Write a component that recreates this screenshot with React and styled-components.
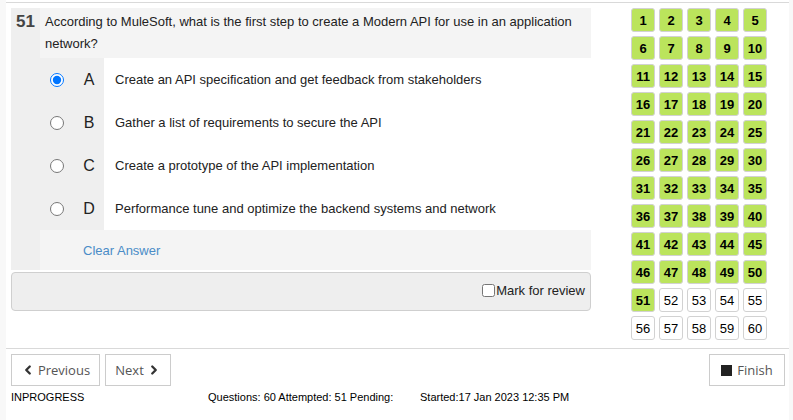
import React from "react";
import styled, { createGlobalStyle } from "styled-components";
import { ChevronLeft, ChevronRight } from "lucide-react";

const Global = createGlobalStyle`
  html, body { margin: 0; padding: 0; background: #f8f8f8; }
  body { font-family: "Liberation Sans", Arial, sans-serif; color: #222; }
  * { box-sizing: border-box; }
`;

const Page = styled.div`
  margin-left: 6px;
  width: 783px;
  height: 420px;
  background: #fff;
  padding-top: 2px;
  overflow: hidden;
`;

const Main = styled.div`
  border-top: 1px solid #d9d9d9;
  display: flex;
  padding: 5px 0 0 5px;
  height: 347px;
  border-bottom: 1px solid #d9d9d9;
`;

const Left = styled.div`
  width: 580px;
  display: flex;
  flex-direction: column;
`;

const Panel = styled.div`
  display: flex;
  background: #efefef;
`;

const NumCell = styled.div`
  width: 29px;
  font-size: 17px;
  font-weight: bold;
  color: #444;
  padding: 4px 0 0 5px;
  line-height: 20px;
`;

const Body = styled.div`
  flex: 1;
  display: flex;
  flex-direction: column;
`;

const QText = styled.div`
  background: #f4f4f4;
  font-size: 13px;
  line-height: 22px;
  padding: 3px 6px 3px 5px;
  color: #222;
  height: 50px;
`;

const Option = styled.label`
  display: flex;
  height: 43px;
  align-items: stretch;
`;

const RadioCell = styled.div`
  width: 34px;
  display: flex;
  align-items: center;
  justify-content: center;
  input { margin: 0; width: 14px; height: 14px; }
`;

const Letter = styled.div`
  width: 30px;
  display: flex;
  align-items: center;
  justify-content: center;
  font-size: 16px;
  color: #222;
`;

const OptText = styled.div`
  flex: 1;
  background: #fff;
  display: flex;
  align-items: center;
  padding-left: 11px;
  font-size: 13px;
  color: #222;
`;

const ClearRow = styled.div`
  height: 40px;
  background: #f4f4f4;
  display: flex;
  align-items: center;
  padding-left: 43px;
  font-size: 13px;
  color: #4a8cc7;
`;

const Review = styled.div`
  margin-top: 2px;
  height: 39px;
  background: #eeeeee;
  border: 1px solid #cfcfcf;
  border-radius: 4px;
  display: flex;
  justify-content: flex-end;
  align-items: center;
  padding: 0 5px 2px 0;
  font-size: 13px;
  color: #222;
  input { margin: 0 1px 0 0; width: 13px; height: 13px; }
`;

const Right = styled.div`
  flex: 1;
  padding-left: 40px;
`;

const Grid = styled.div`
  display: grid;
  grid-template-columns: repeat(5, 24px);
  grid-auto-rows: 24px;
  gap: 4px;
`;

const Cell = styled.div`
  border: 1px solid #d2d2d2;
  border-radius: 3px;
  background: ${(p) => (p.$done ? "#bbe45c" : "#fff")};
  font-weight: ${(p) => (p.$done ? "bold" : "normal")};
  font-size: 13px;
  color: #000;
  display: flex;
  align-items: center;
  justify-content: center;
`;

const Footer = styled.div`
  padding: 5px 4px 0 5px;
`;

const BtnRow = styled.div`
  display: flex;
  gap: 5px;
`;

const Btn = styled.button`
  height: 32px;
  width: ${(p) => p.$w}px;
  border: 1px solid #cccccc;
  background: #fff;
  font-family: "Open Sans", sans-serif;
  font-size: 13px;
  color: #555;
  display: flex;
  align-items: center;
  justify-content: center;
  gap: 3px;
  padding: 0;
  margin-left: ${(p) => (p.$push ? "auto" : "0")};
  svg { color: #333; }
`;

const Square = styled.span`
  width: 11px;
  height: 11px;
  background: #222;
  display: inline-block;
  margin-right: 2px;
`;

const Status = styled.div`
  display: flex;
  font-size: 11px;
  color: #000;
  margin-top: 5px;
  line-height: 13px;
`;

const StatusItem = styled.div`
  width: ${(p) => (p.$w ? p.$w + "px" : "auto")};
`;

const options = [
  ["A", "Create an API specification and get feedback from stakeholders", true],
  ["B", "Gather a list of requirements to secure the API", false],
  ["C", "Create a prototype of the API implementation", false],
  ["D", "Performance tune and optimize the backend systems and network", false],
];

export default function App() {
  return (
    <>
      <Global />
      <Page>
        <Main>
          <Left>
            <Panel>
              <NumCell>51</NumCell>
              <Body>
                <QText>
                  According to MuleSoft, what is the first step to create a Modern API for use in an application network?
                </QText>
                {options.map(([l, t, c]) => (
                  <Option key={l}>
                    <RadioCell>
                      <input type="radio" name="ans" defaultChecked={c} />
                    </RadioCell>
                    <Letter>{l}</Letter>
                    <OptText>{t}</OptText>
                  </Option>
                ))}
                <ClearRow>Clear Answer</ClearRow>
              </Body>
            </Panel>
            <Review>
              <input type="checkbox" />
              Mark for review
            </Review>
          </Left>
          <Right>
            <Grid>
              {Array.from({ length: 60 }, (_, i) => (
                <Cell key={i} $done={i < 51}>{i + 1}</Cell>
              ))}
            </Grid>
          </Right>
        </Main>
        <Footer>
          <BtnRow>
            <Btn $w={89}>
              <ChevronLeft size={14} strokeWidth={4} />
              Previous
            </Btn>
            <Btn $w={66}>
              Next
              <ChevronRight size={14} strokeWidth={4} />
            </Btn>
            <Btn $w={76} $push>
              <Square />
              Finish
            </Btn>
          </BtnRow>
          <Status>
            <StatusItem $w={197}>INPROGRESS</StatusItem>
            <StatusItem $w={212}>Questions: 60 Attempted: 51 Pending:</StatusItem>
            <StatusItem>Started:17 Jan 2023 12:35 PM</StatusItem>
          </Status>
        </Footer>
      </Page>
    </>
  );
}
